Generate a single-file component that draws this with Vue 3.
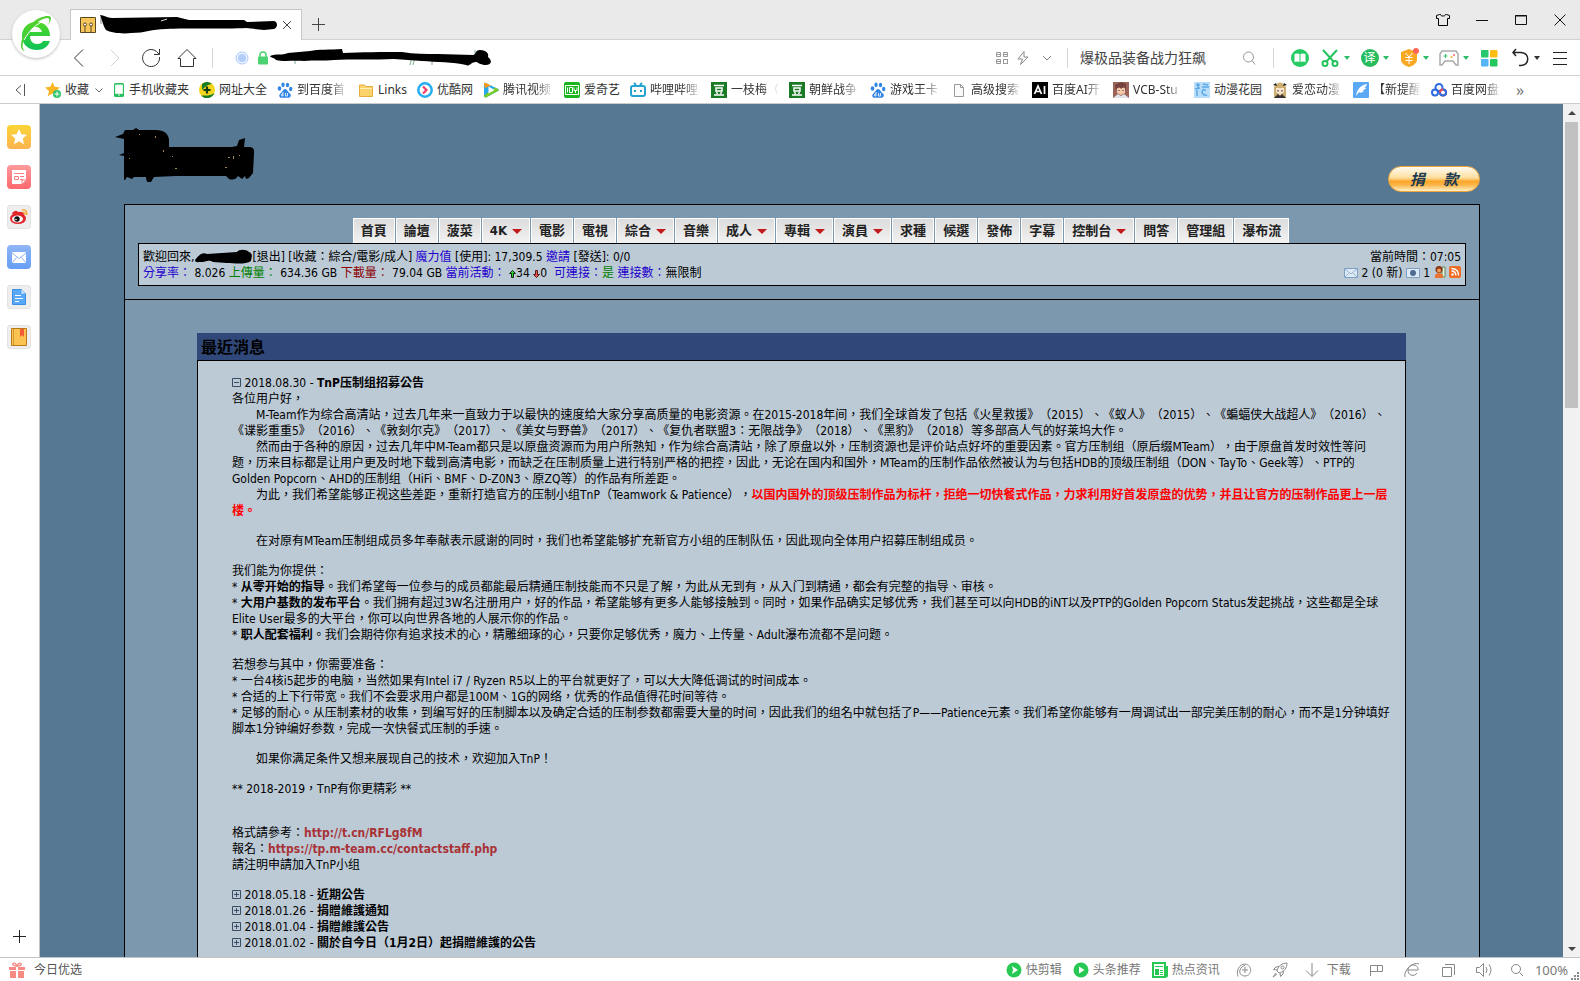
<script setup>
import { ref } from 'vue'

const search = ref('爆极品装备战力狂飙')
const address = ref('')

const bookmarks = [
  { icon: 'star', text: '收藏', more: true },
  { icon: 'phone', text: '手机收藏夹' },
  { icon: 'plus', text: '网址大全' },
  { icon: 'paw', text: '到百度首', clip: true },
  { icon: 'folder', text: 'Links' },
  { icon: 'youku', text: '优酷网' },
  { icon: 'tencent', text: '腾讯视频', clip: true },
  { icon: 'iqiyi', text: '爱奇艺' },
  { icon: 'bili', text: '哔哩哔哩', clip: true },
  { icon: 'dou', text: '一枝梅（', fade: true },
  { icon: 'dou', text: '朝鲜战争', clip: true },
  { icon: 'paw', text: '游戏王卡', clip: true },
  { icon: 'page', text: '高级搜索', clip: true },
  { icon: 'ai', text: '百度AI开', clip: true },
  { icon: 'girl', text: 'VCB-Stu', clip: true },
  { icon: 'garden', text: '动漫花园' },
  { icon: 'blonde', text: '爱恋动漫', clip: true },
  { icon: 'feather', text: '【新提醒', fade: true },
  { icon: 'cloud', text: '百度网盘', clip: true }
]

const menu = [
  { text: '首頁' }, { text: '論壇' }, { text: '菠菜' }, { text: '4K', sub: true },
  { text: '電影' }, { text: '電視' }, { text: '綜合', sub: true }, { text: '音樂' },
  { text: '成人', sub: true }, { text: '專輯', sub: true }, { text: '演員', sub: true },
  { text: '求種' }, { text: '候選' }, { text: '發佈' }, { text: '字幕' },
  { text: '控制台', sub: true }, { text: '問答' }, { text: '管理組' }, { text: '瀑布流' }
]

const older = [
  { date: '2018.05.18', title: '近期公告' },
  { date: '2018.01.26', title: '捐贈維護通知' },
  { date: '2018.01.04', title: '捐贈維護公告' },
  { date: '2018.01.02', title: '關於自今日（1月2日）起捐贈維護的公告' }
]

const sideItems = ['fav', 'headlines', 'weibo', 'mail', 'doc', 'book']
</script>

<template>
  <div class="browser" lang="zh-CN">
    <div class="brand">
      <svg width="34" height="40" viewBox="0 0 34 40" aria-label="浏览器">
        <defs>
          <linearGradient id="eg" x1="0" y1="0" x2="0" y2="1">
            <stop offset="0" stop-color="#52d926" /><stop offset="1" stop-color="#0cc257" />
          </linearGradient>
        </defs>
        <path d="M31 22H11c0 5 3 8 7 8 3 0 5-1 6-3h7c-2 6-7 9-13 9C9 36 3 30 3 22 3 14 9 8 17 8c9 0 14 6 14 14zM11 18h12c-1-3-3-5-6-5s-5 2-6 5z" fill="url(#eg)" />
        <path d="M5 25C11 13 20 5 28 4c3 0 3 3 1 7 4-6 4-9 0-9C19 2 6 12 3 25c-2 7-1 12 3 12-3-2-3-6-1-12z" fill="#52cf32" />
        <path d="M5 26C10 17 17 10 25 7" fill="none" stroke="#fff" stroke-width="1" />
      </svg>
    </div>

    <header class="titlebar">
      <div class="tab">
        <svg class="favicon" width="16" height="16" viewBox="0 0 16 16"><path d="M.5.5h15v15H.5z" fill="#f6c65b" stroke="#5c4a22" /><g fill="#fff" stroke="#5c4a22"><circle cx="5" cy="7.500" r="1.500" /><circle cx="11" cy="7.500" r="1.500" /><path d="M5 9v6M11 9v6" /></g></svg>
        <svg class="tab-mask" width="180" height="20" viewBox="0 0 180 20"><path d="M1 2v7" stroke="#888" /><path d="M0 0c4 0 7 3 12 3l65-1 12 3h55l3 2 27-1c4 1 4 6 0 8l-10 1-18-2c-20 1-60 0-80 1-15 0-20 4-35 4-8 1-20 0-25-3C3 11 2 4 0 0z" fill="#000" /><path d="M61 6l6-2" stroke="#ddd" /></svg>
        <button class="tab-close" aria-label="关闭标签"><svg width="10" height="10" viewBox="0 0 10 10"><path d="M1 1l8 8M9 1L1 9" /></svg></button>
      </div>
      <button class="newtab" aria-label="新建标签"><svg width="13" height="13" viewBox="0 0 13 13"><path d="M6.500 0v13M0 6.500h13" /></svg></button>
      <div class="window-buttons">
        <button aria-label="皮肤"><svg width="14" height="14" viewBox="0 0 14 14"><path d="M4.500 1.500c0 2 5 2 5 0h1l3 1v3h-2v7h-9v-7h-2v-3l3-1z" stroke="#000" /></svg></button>
        <button aria-label="最小化"><svg width="14" height="14" viewBox="0 0 14 14"><path d="M1 7.500h12" stroke="#111" /></svg></button>
        <button aria-label="最大化"><svg width="14" height="14" viewBox="0 0 14 14"><path d="M1.500 2.500h11v9h-11zM1 3h12" stroke="#111" /></svg></button>
        <button aria-label="关闭"><svg width="14" height="14" viewBox="0 0 14 14"><path d="M1.500 1.500l11 11m0-11l-11 11" stroke="#111" /></svg></button>
      </div>
    </header>

    <nav class="toolbar" aria-label="导航栏">
      <button class="nav" aria-label="后退"><svg width="20" height="20" viewBox="0 0 20 20"><path d="M14 1.500L5.500 10l8.500 8.500" /></svg></button>
      <button class="nav off" aria-label="前进"><svg width="20" height="20" viewBox="0 0 20 20"><path d="M6 2l8 8-8 8" /></svg></button>
      <button class="nav" aria-label="刷新"><svg width="20" height="20" viewBox="0 0 20 20"><path d="M18.500 9A8.500 8.500 0 1 1 15.500 3.500L18 6M18.500 1v5.500H13" /></svg></button>
      <button class="nav" aria-label="主页"><svg width="20" height="20" viewBox="0 0 20 20"><path d="M1 10.500L10 1.500l9 9h-2.500v8h-13v-8z" /></svg></button>
      <i class="divider"></i>
      <div class="address">
        <svg width="14" height="14" viewBox="0 0 14 14"><circle cx="7" cy="7" r="6" fill="#eef4ff" stroke="#a9c8fb" /><circle cx="7" cy="7" r="4" fill="#b3ccfa" /></svg>
        <svg width="12" height="14" viewBox="0 0 12 14"><path d="M3 6V4a3 3 0 0 1 6 0v2" fill="none" stroke="#4bd373" stroke-width="1.500" /><rect x="1" y="5.500" width="10" height="8" rx="1" fill="#4bd373" /></svg>
        <svg class="url-mask" width="224" height="20" viewBox="0 0 224 20"><path d="M25 12v4M142 9l-2 8m5-8l-2 8m19-8v8m43-15v5" stroke="#7fae90" /><path d="M0 8c6-3 12 0 18-3l22-2c8-2 20-1 32-2l1 4c18-1 40-1 59-1 12 2 24 2 36 2l35 1c3 0 2-5 7-5 7 0 9 4 8 7 5 4 3 8-2 8-4 0-8-2-9-3-5-1-8 5-11 3-12-3-30-3-44-4l-28-2c-20 1-45 0-60 1-10 1-20 0-30 1-10-1-20 1-28-1-2-3-6-2-6-4z" fill="#000" /></svg>
        <input v-model="address" aria-label="地址">
        <svg width="12" height="12" viewBox="0 0 12 12" fill="none" stroke="#999"><path d="M.5.500h4v4h-4zM7.500.500h4v4h-4zM.5 7.500h4v4h-4zM7 7.500h5M7 11.500h5M7.500 7v5M11.500 7v5M1 2.500h3M8 2.500h3M1 9.500h3" /></svg>
        <svg width="14" height="14" viewBox="0 0 14 14" fill="none" stroke="#888"><path d="M8 .5L2 8h4.500l-2 5.500L12 6H8z" /></svg>
        <svg width="10" height="10" viewBox="0 0 10 10" fill="none" stroke="#888"><path d="M1 3l4 4 4-4" /></svg>
      </div>
      <i class="divider"></i>
      <div class="search">
        <input v-model="search" aria-label="搜索">
        <button aria-label="搜索"><svg width="14" height="14" viewBox="0 0 14 14" fill="none" stroke="#999"><circle cx="6.500" cy="6" r="5" /><path d="M10 9.500l3 4" /></svg></button>
      </div>
      <i class="divider"></i>
      <div class="tools">
        <button aria-label="阅读"><svg width="20" height="20" viewBox="0 0 20 20"><circle cx="10" cy="10" r="9" fill="#27cb65" /><path d="M4.500 6q3-1 5 0v8q-2-1-5 0zM15.500 6q-3-1-5 0v8q2-1 5 0z" fill="#fff" /></svg></button>
        <button aria-label="截图"><svg width="20" height="20" viewBox="0 0 20 20" fill="none" stroke="#25c35d" stroke-width="2"><path d="M3 2l11 12M17 2L6 14" /><circle cx="5" cy="15.500" r="2.500" /><circle cx="15" cy="15.500" r="2.500" /></svg><b class="caret green"></b></button>
        <button aria-label="翻译"><span class="translate">译</span><b class="caret green"></b></button>
        <button aria-label="购物"><svg width="20" height="20" viewBox="0 0 20 20"><path d="M10 1l8 3v8c0 3-4 6-8 7-4-1-8-4-8-7V4z" fill="#faa924" /><path d="M6.500 5L10 9l3.500-4M10 9v7M6.500 9.500h7M6.500 12.500h7" fill="none" stroke="#fff" /><circle cx="17" cy="3" r="3" fill="#ff6557" /></svg><b class="caret green"></b></button>
        <button aria-label="游戏"><svg width="20" height="20" viewBox="0 0 20 20"><path d="M3 3h14l2 3v11h-2l-3-4H6l-3 4H1V6z" fill="#fff" stroke="#aaa" stroke-width="1.500" /><path d="M4.500 8h4M6.500 6v4" stroke="#30c665" /><circle cx="12.500" cy="9" r="1" fill="#fbb020" /><circle cx="15" cy="7" r="1" fill="#f66" /></svg><b class="caret green"></b></button>
        <button aria-label="应用"><svg width="20" height="20" viewBox="0 0 20 20"><rect x="2" y="2" width="7.500" height="7.500" rx="1" fill="#27c76b" /><rect x="11" y="2" width="7.500" height="7.500" rx="1" fill="#ffbc13" /><rect x="2" y="11" width="7.500" height="7.500" rx="1" fill="#55b5f6" /><rect x="11" y="11" width="7.500" height="7.500" rx="1" fill="#24c65d" /></svg></button>
        <button aria-label="撤销"><svg width="20" height="20" viewBox="0 0 20 20" fill="none" stroke="#222" stroke-width="1.500"><path d="M6 1L3 4.500 6 8M3 4.500h8c9 0 9 13 0 13H9" /></svg><b class="caret"></b></button>
        <button aria-label="菜单"><svg width="20" height="20" viewBox="0 0 20 20" stroke="#222"><path d="M3 4.500h14M3 10.500h14M3 16.500h14" /></svg></button>
      </div>
    </nav>

    <nav class="bookmarks" aria-label="收藏栏">
      <button class="fold" aria-label="收起"><svg width="12" height="14" viewBox="0 0 12 14" fill="none" stroke="#555"><path d="M7 2.500L2 7l5 4.500M10.500 1v12" /></svg></button>
      <a v-for="(b, i) in bookmarks" :key="i" href="#" class="mark">
        <svg :width="b.icon === 'phone' ? 12 : 16" height="16" :viewBox="b.icon === 'phone' ? '2 0 12 16' : '0 0 16 16'">
          <g v-if="b.icon === 'star'"><path d="M7.500 0l2.200 4.800 5.300.6-4 3.500 1.200 5.300-4.700-2.700-4.700 2.700L4 8.900 0 5.400l5.300-.6z" fill="#f9b522" /><circle cx="12" cy="12" r="4" fill="#2fc66b" /><path d="M12 9.500v5M9.500 12h5" stroke="#fff" /></g>
          <g v-else-if="b.icon === 'phone'"><rect x="3" y="1" width="10" height="14" rx="1.500" fill="#27c05c" /><path d="M4.500 3h7v8.500h-7zM7 13h2" fill="#fff" stroke="#dff7e7" /></g>
          <g v-else-if="b.icon === 'plus'"><circle cx="8" cy="8" r="8" fill="#f6d51d" /><path d="M3 2a8 8 0 0 1 10 0Q8 2 3 8zM2 13.500A8 8 0 0 0 15.500 11Q12 14 2 13.500z" fill="#157c27" /><path d="M8 4.500v7M4.500 8h7" stroke="#123c12" stroke-width="2.200" /></g>
          <g v-else-if="b.icon === 'paw'" fill="#3385e6"><ellipse cx="2.500" cy="6.500" rx="1.800" ry="2.200" /><ellipse cx="6" cy="2.800" rx="1.700" ry="2.400" /><ellipse cx="10.500" cy="3" rx="1.700" ry="2.300" /><ellipse cx="13.700" cy="7" rx="1.700" ry="2.200" /><path d="M8 7c2 0 3 3 5 4.500 2 2 0 4.500-2 4.300H5C2.500 16 1.500 13.500 3 12c2-1.500 3-5 5-5z" /><path d="M6 10v4H5q-1.500-1 0-2h1M8.500 11v3h2v-3" fill="none" stroke="#fff" stroke-width=".8" /></g>
          <g v-else-if="b.icon === 'folder'"><path d="M1.500 3h5l1 1.500h7v10h-13z" fill="#fcd36b" stroke="#e5ad3c" /><path d="M2 6.500h12" stroke="#fff0b8" /></g>
          <g v-else-if="b.icon === 'youku'"><circle cx="8" cy="8" r="6.700" fill="#fff" stroke="#25aef2" stroke-width="2.500" /><path d="M6 4.500L9.500 8 6 11.500" fill="none" stroke="#ef3c6d" stroke-width="2.200" /></g>
          <g v-else-if="b.icon === 'tencent'"><path d="M1 2q0-2 2-1l12 6q1.500 1 0 2L3 15.500q-2 .5-2-2z" fill="#26a9ea" /><path d="M3 15.500L15 9q1.500-1 0-2l-3-1.500L1 13.500q0 2.500 2 2z" fill="#77cc2c" /><path d="M1 2q0-2 2-1l5 2.500L2 6z" fill="#ff9b17" /><path d="M5.500 4.500l6 3.500-6 3.500z" fill="#fff" /></g>
          <g v-else-if="b.icon === 'iqiyi'"><rect width="16" height="16" rx="2" fill="#18b51b" /><path d="M1.500 3.500h13v9h-13zM3.500 5.500v5M5.500 5.500h3v5h-3zM10 5.500v3h3v-3M11.500 8v3" fill="none" stroke="#fff" /></g>
          <g v-else-if="b.icon === 'bili'" fill="none" stroke="#25a3d0" stroke-width="2"><rect x="1" y="4" width="14" height="10" rx="2" /><path d="M4 1l2 2M12 1l-2 2M5 8v2M11 8v2" /></g>
          <g v-else-if="b.icon === 'dou'"><rect width="16" height="16" fill="#1a7a25" /><path d="M3 3.500h10M5 6h6v3H5zM5.500 10l1 2M10.500 10l-1 2M3 13h10" fill="none" stroke="#fff" stroke-width="1.500" /></g>
          <path v-else-if="b.icon === 'page'" d="M3.500 2.500h6l3 3v9h-9zM9.500 2.500v3h3" fill="#fafafa" stroke="#999" />
          <g v-else-if="b.icon === 'ai'"><rect width="16" height="16" /><path d="M2.500 12L6 4l3.500 8M4 9.500h4M12.500 4v8" fill="none" stroke="#fff" stroke-width="1.700" /></g>
          <g v-else-if="b.icon === 'girl'"><rect width="16" height="16" fill="#9b635a" /><path d="M4 6h8v5l-4 2-4-2z" fill="#f3c8ac" /><path d="M0 16l5-4 3 2 3-2 5 4z" fill="#dfe3ec" /><path d="M3 8l3-4 2 3 3-3 2 5V2L8 0 2 3z" fill="#74413c" /><path d="M6 8v1M10 8v1" stroke="#533" /></g>
          <g v-else-if="b.icon === 'garden'"><rect width="16" height="16" fill="#b7ddfa" /><path d="M2 3h4M4 1v6M1 7l5-1M3 8v6M9 2l5 1M8 5h7M10 7c-4 3-1 7 3 6M12 8h-3" fill="none" stroke="#5ca9e6" stroke-width="1.500" /></g>
          <g v-else-if="b.icon === 'blonde'"><path d="M2 16V5q6-9 12 0v11z" fill="#cfae73" /><path d="M4 6h8v4l-4 3-4-3z" fill="#fae3cd" /><path d="M1 3l3-2 1 3zM15 3l-3-2-1 3z" fill="#222" /><path d="M2 16l4-4 2 2 2-2 4 4z" fill="#333" /><path d="M6 8v1.500M10 8v1.500" stroke="#222" /></g>
          <g v-else-if="b.icon === 'feather'"><rect width="16" height="16" rx="1" fill="#5ba8f5" /><path d="M3 14C4 7 8 3 14 2c-1 3-2 3-3 3l2 1c-1 2-3 2-4 2l2 1c-2 2-4 2-5 1z" fill="#fff" /></g>
          <g v-else fill="none" stroke="#2c6be0" stroke-width="2"><circle cx="8" cy="5.500" r="3.500" /><circle cx="4" cy="10.500" r="3" /><circle cx="12" cy="10.500" r="3" stroke="#e8475c" /><path d="M12 7.500a3 3 0 1 1-3 3" /></g>
        </svg>
        <span :class="{ clip: b.clip, fade: b.clip || b.fade }">{{ b.text }}</span>
        <svg v-if="b.more" class="more" width="8" height="8" viewBox="0 0 8 8" fill="none" stroke="#666"><path d="M.5 2.500L4 6l3.500-3.500" /></svg>
      </a>
      <button class="overflow" aria-label="更多收藏">»</button>
    </nav>

    <div class="middle">
      <aside class="sidebar">
        <button v-for="s in sideItems" :key="s" :class="['side', s]" :aria-label="s">
          <svg width="24" height="24" viewBox="0 0 24 24">
            <path v-if="s === 'fav'" d="M12 4l2.400 5.200 5.600.6-4.200 3.800 1.200 5.600-5-2.900-5 2.900 1.200-5.600L4 9.800l5.600-.6z" fill="#fff" />
            <g v-else-if="s === 'headlines'"><path d="M5 5h14v10l-4 4H5z" fill="#fff" /><path d="M7 8.500h10M13 11.500h4M13 14.500h3M15 19v-4h4" stroke="#ff7c80" fill="none" /><path d="M7.500 11.500h4v3h-4z" fill="none" stroke="#ff7c80" /></g>
            <g v-else-if="s === 'weibo'"><ellipse cx="11" cy="13.500" rx="8" ry="5.500" fill="#e1262d" /><path d="M5 8q4-4 6-1 5-1 6 2l-2 4-8-1z" fill="#e1262d" /><ellipse cx="10.500" cy="14" rx="5.500" ry="3.500" fill="#fff" /><circle cx="10" cy="14" r="2.700" fill="#111" /><circle cx="9" cy="14.500" r=".8" fill="#fff" /><path d="M15 5q5-1 5 5M15.500 7.500q3-.5 2.500 2.500" fill="none" stroke="#f7a029" stroke-width="1.300" /></g>
            <g v-else-if="s === 'mail'"><rect x="5" y="7" width="14" height="11" rx="1" fill="#fff" /><path d="M5 8l7 5.500L19 8M5.500 17.500l4-5M18.500 17.500l-4-5" fill="none" stroke="#91b4f2" /></g>
            <g v-else-if="s === 'doc'"><path d="M5.500 4.500h9l4 4v11h-13z" fill="#5aa9f9" stroke="#3c8ee2" /><path d="M14.500 4.500v4h4z" fill="#d5eaff" /><path d="M8 10.500h6M8 13.500h8M8 16.500h4" stroke="#fff" /></g>
            <g v-else><path d="M4.500 3.500h15v17h-15z" fill="#fbc34f" stroke="#b87918" /><path d="M6.500 4v16" stroke="#d59a2d" /><path d="M13 4h4v8l-2-2-2 2z" fill="#f35b35" /></g>
          </svg>
        </button>
        <button class="add" aria-label="添加"><svg width="13" height="13" viewBox="0 0 13 13"><path d="M6.500 0v13M0 6.500h13" stroke="#222" /></svg></button>
      </aside>

      <main class="page">
        <header class="masthead">
          <svg class="logo-mask" width="142" height="54" viewBox="0 0 142 54"><path d="M0 9l8-3 2-4h8l3-2 3 2h17q12 0 13 10v7h63l5-1 2-6 6-2-1 9h5q6 0 5 6l-1 20-4 5-3 1-1-3-3 3-4-3q-3 5-9 3l-3-3H61l-22 1-3 5q-5 2-5-5H19l-2 2-5-2-2 3H9V28l-5-1 5-2V11z" fill="#000" /><g fill="#a58a4d"><path d="M24 6h1v1h-1zM40 8h1v2h-1zM48 22h1v2h-1zM14 30h1v1h-1zM57 28h1v1h-1zM60 40h2v1h-2zM113 29h2v1h-2zM118 28h1v3h-1zM110 39h2v1h-2zM124 27h1v1h-1z" /></g></svg>
          <a class="donate" href="#">捐　 款</a>
        </header>

        <div class="frame" lang="zh-TW">
          <div class="top">
            <ul class="menu">
              <li v-for="m in menu" :key="m.text"><a href="#">{{ m.text }}<b v-if="m.sub" class="down"></b></a></li>
            </ul>
            <div class="info">
              <div>
                歡迎回來,<svg class="name-mask" width="58" height="16" viewBox="0 0 58 16"><path d="M1 11C5 6 8 3 13 5l15-1 15-1c2-3 9-3 12 0 5 2 2 6 2 9-6 4-17 2-24 2l-14-1c-4-3-8 0-12 0-3 0-6 1-6-2z" /></svg>[<a href="#">退出</a>] [<a href="#">收藏</a>：<a href="#">綜合</a>/<a href="#">電影</a>/<a href="#">成人</a>] <span class="blue">魔力值</span> [<a href="#">使用</a>]: 17,309.5 <span class="blue">邀請</span> [<a href="#">發送</a>]: 0/0<br>
                <span class="blue">分享率：</span> 8.026 <span class="green">上傳量：</span> 634.36 GB <span class="maroon">下載量：</span> 79.04 GB <span class="blue">當前活動：</span> <svg width="7" height="8" viewBox="0 0 7 8"><path d="M3.500.5l3 3h-2v4h-2v-4h-2z" fill="#29d32d" stroke="#000" stroke-width=".8" /></svg>34 <svg width="7" height="8" viewBox="0 0 7 8"><path d="M3.500 7.500l3-3h-2v-4h-2v4h-2z" fill="#f3524a" stroke="#300" stroke-width=".8" /></svg>0 &nbsp;<span class="blue">可連接：</span><span class="green">是</span> <span class="blue">連接數：</span>無限制
              </div>
              <div class="right">
                當前時間：07:05<br>
                <svg width="14" height="10" viewBox="0 0 14 10"><path d="M.5.500h13v9H.5z" fill="#dce9f6" stroke="#7f9fc2" /><path d="M1 1l6 5 6-5M1 9l4-4M13 9L9 5" fill="none" stroke="#9ab4cf" /></svg> 2 (0 新) <svg width="14" height="10" viewBox="0 0 14 10"><path d="M.5.500h13v9H.5z" fill="#dce9f6" stroke="#7f9fc2" /><circle cx="7" cy="5" r="3" fill="#4f6c90" /></svg> 1 <svg width="12" height="12" viewBox="0 0 12 12"><path d="M8 1h3v10H8z" fill="#e8f4df" stroke="#5d8650" /><circle cx="5" cy="3.500" r="3.500" fill="#8a3513" /><circle cx="5" cy="4.500" r="2" fill="#f0a060" /><path d="M1 12V9q4-4 8 0v3z" fill="#e9742f" /></svg> <svg width="12" height="12" viewBox="0 0 12 12"><rect width="12" height="12" rx="2" fill="#ef6d24" /><circle cx="3.500" cy="8.500" r="1.200" fill="#fff" /><path d="M2.500 5q4 0 4.500 4.500M2.500 2.500q7 0 7 7" fill="none" stroke="#fff" stroke-width="1.300" /></svg>
              </div>
            </div>
          </div>

          <section class="news">
            <h2>最近消息</h2>
            <div class="body">
              <p>
                <button class="toggle" aria-label="折叠"><svg width="9" height="9" viewBox="0 0 9 9"><path d="M.5.500h8v8h-8zM2 4.500h5" /></svg></button> 2018.08.30 - <b>TnP压制组招募公告</b><br>
                各位用户好，<br>
                　　M-Team作为综合高清站，过去几年来一直致力于以最快的速度给大家分享高质量的电影资源。在2015-2018年间，我们全球首发了包括《火星救援》（2015）、《蚁人》（2015）、《蝙蝠侠大战超人》（2016）、<br>
                《谍影重重5》（2016）、《敦刻尔克》（2017）、《美女与野兽》（2017）、《复仇者联盟3：无限战争》（2018）、《黑豹》（2018）等多部高人气的好莱坞大作。<br>
                　　然而由于各种的原因，过去几年中M-Team都只是以原盘资源而为用户所熟知，作为综合高清站，除了原盘以外，压制资源也是评价站点好坏的重要因素。官方压制组（原后缀MTeam），由于原盘首发时效性等问<br>
                题，历来目标都是让用户更及时地下载到高清电影，而缺乏在压制质量上进行特别严格的把控，因此，无论在国内和国外，MTeam的压制作品依然被认为与包括HDB的顶级压制组（DON、TayTo、Geek等）、PTP的<br>
                Golden Popcorn、AHD的压制组（HiFi、BMF、D-Z0N3、原ZQ等）的作品有所差距。<br>
                　　为此，我们希望能够正视这些差距，重新打造官方的压制小组TnP（Teamwork &amp; Patience），<b class="red">以国内国外的顶级压制作品为标杆，拒绝一切快餐式作品，力求利用好首发原盘的优势，并且让官方的压制作品更上一层<br>
                楼。</b>
              </p>
              <p>　　在对原有MTeam压制组成员多年奉献表示感谢的同时，我们也希望能够扩充新官方小组的压制队伍，因此现向全体用户招募压制组成员。</p>
              <p>
                我们能为你提供：<br>
                * <b>从零开始的指导</b>。我们希望每一位参与的成员都能最后精通压制技能而不只是了解，为此从无到有，从入门到精通，都会有完整的指导、审核。<br>
                * <b>大用户基数的发布平台</b>。我们拥有超过3W名注册用户，好的作品，希望能够有更多人能够接触到。同时，如果作品确实足够优秀，我们甚至可以向HDB的iNT以及PTP的Golden Popcorn Status发起挑战，这些都是全球<br>
                Elite User最多的大平台，你可以向世界各地的人展示你的作品。<br>
                * <b>职人配套福利</b>。我们会期待你有追求技术的心，精雕细琢的心，只要你足够优秀，魔力、上传量、Adult瀑布流都不是问题。
              </p>
              <p>
                若想参与其中，你需要准备：<br>
                * 一台4核i5起步的电脑，当然如果有Intel i7 / Ryzen R5以上的平台就更好了，可以大大降低调试的时间成本。<br>
                * 合适的上下行带宽。我们不会要求用户都是100M、1G的网络，优秀的作品值得花时间等待。<br>
                * 足够的耐心。从压制素材的收集，到编写好的压制脚本以及确定合适的压制参数都需要大量的时间，因此我们的组名中就包括了P——Patience元素。我们希望你能够有一周调试出一部完美压制的耐心，而不是1分钟填好<br>
                脚本1分钟编好参数，完成一次快餐式压制的手速。
              </p>
              <p>　　如果你满足条件又想来展现自己的技术，欢迎加入TnP！</p>
              <p class="last">** 2018-2019，TnP有你更精彩 **</p>
              <p>
                格式請參考：<a class="link" href="#">http://t.cn/RFLg8fM</a><br>
                報名：<a class="link" href="#">https://tp.m-team.cc/contactstaff.php</a><br>
                請注明申請加入TnP小组
              </p>
              <ul class="older">
                <li v-for="o in older" :key="o.date">
                  <button class="toggle" aria-label="展開"><svg width="9" height="9" viewBox="0 0 9 9"><path d="M.5.500h8v8h-8zM2 4.500h5M4.500 2v5" /></svg></button> {{ o.date }} - <b>{{ o.title }}</b>
                </li>
              </ul>
            </div>
          </section>
        </div>
      </main>

      <div class="scrollbar" aria-hidden="true">
        <b class="arrow up"></b>
        <i class="thumb"></i>
        <b class="arrow"></b>
      </div>
    </div>

    <footer class="statusbar">
      <a href="#" class="pick"><svg width="16" height="16" viewBox="0 0 16 16"><path d="M0 5h7v3H0zM9 5h7v3H9zM1 9h6v7H1zM9 9h6v7H9z" fill="#f88a84" /><path d="M8 4Q3 4 4 1.500 6 0 8 4q2-4 4-2.500 1 2.500-4 2.500" fill="none" stroke="#f88a84" stroke-width="1.300" /></svg>今日优选</a>
      <div class="status-right">
        <a href="#"><svg width="16" height="16" viewBox="0 0 16 16"><circle cx="8" cy="8" r="7.500" fill="#27c954" /><path d="M6 4l6 4-6 4 1-4z" fill="#fff" /></svg>快剪辑</a>
        <a href="#"><svg width="16" height="16" viewBox="0 0 16 16"><circle cx="8" cy="8" r="7.500" fill="#27c954" /><path d="M6 4.500l5.500 3.500L6 11.500z" fill="#fff" /></svg>头条推荐</a>
        <a href="#" class="feed"><svg width="16" height="16" viewBox="0 0 16 16"><path d="M1 1h12v14H1z" fill="#fff" stroke="#27c954" stroke-width="2" /><path d="M14 5h1v9l-2 1" fill="none" stroke="#27c954" stroke-width="2" /><path d="M3 4.500h8M8 8.500h3M8 10.500h3M8 12.500h3" stroke="#27c954" /><path d="M3 7h4v6H3z" fill="#27c954" /></svg>热点资讯</a>
        <button class="slot" aria-label="加速"><svg width="16" height="16" viewBox="0 0 16 16"><path d="M2 14.500C0 9 3 2 9 2c8 1 7 12 0 12-4 0-6-3-5-6 1-3 3-4 5-4.500M9 5v6M6 8h6" /></svg></button>
        <button class="slot" aria-label="火箭"><svg width="16" height="16" viewBox="0 0 16 16"><path d="M5 9c1-5 5-8 10-8 0 5-3 9-8 10zM5 8L1.500 7.500 4 5l3-.5M8 11l.5 3.500L11 12l.5-3M4 11l-3 4 4-3" /><circle cx="10.500" cy="5.500" r="1.500" /></svg></button>
        <a href="#" class="download"><svg width="16" height="16" viewBox="0 0 16 16"><path d="M8 1v13M2 8.500L8 14.500l6-6" /></svg>下载</a>
        <button class="slot" aria-label="标记"><svg width="16" height="16" viewBox="0 0 16 16"><path d="M2.500 14V3.500h12v6h-5v-6M2.500 9.500h7" /></svg></button>
        <button class="slot" aria-label="内核"><svg width="16" height="16" viewBox="0 0 16 16"><path d="M4 8h10c1-6-9-7-10-1-1 7 7 8 9 4M1 15C-1 9 9-1 15 2" /></svg></button>
        <button class="slot" aria-label="窗口"><svg width="16" height="16" viewBox="0 0 16 16"><path d="M2.500 5.500h9v9h-9zM5 2.500h9.500V13" /></svg></button>
        <button class="slot" aria-label="声音"><svg width="18" height="16" viewBox="0 0 18 16"><path d="M1.500 5.500h3l4-4v13l-4-4h-3zM11 5q2 3 0 6M14 2.500q4 5.500 0 11" /></svg></button>
        <button class="zoom"><svg width="14" height="14" viewBox="0 0 14 14"><circle cx="6" cy="6" r="4.500" /><path d="M9.500 9.500L13 13" /></svg>100%</button>
        <svg class="grip" width="9" height="9" viewBox="0 0 9 9"><path d="M6 0h2v2H6zM3 3h2v2H3zM6 3h2v2H6zM0 6h2v2H0zM3 6h2v2H3zM6 6h2v2H6z" /></svg>
      </div>
    </footer>
  </div>
</template>

<style>
body { margin: 0; overflow: hidden; }
</style>

<style scoped>
.browser {
  position: relative;
  display: flex;
  flex-direction: column;
  height: 100vh;
  background: #fff;
  color: #333;
  font: 12px/16px "Noto Sans", "Noto Sans CJK SC", sans-serif;
  text-spacing-trim: space-all;
}
button { border: 0; padding: 0; background: none; color: inherit; font: inherit; display: inline-flex; align-items: center; justify-content: center; }
input { border: 0; outline: 0; padding: 0; background: none; font: inherit; color: inherit; min-width: 0; }
a { color: inherit; text-decoration: none; }
svg { flex: none; }
ul { margin: 0; padding: 0; list-style: none; }

.brand { position: absolute; left: 12px; top: 10px; width: 48px; height: 48px; border-radius: 50%; background: #fff; box-shadow: 0 1px 3px #bbb; display: flex; align-items: center; justify-content: center; z-index: 2; }

.titlebar { flex: none; display: flex; align-items: flex-end; height: 40px; box-sizing: border-box; background: #eaeaea; border-bottom: 1px solid #d2d2d2; padding-left: 70px; }
.tab { display: flex; align-items: center; width: 232px; height: 31px; margin-bottom: -1px; box-sizing: border-box; border: 1px solid #c6c6c6; border-bottom: 0; background: #fff; padding: 0 9px; }
.tab-mask { margin-left: 4px; }
.tab-close { margin-left: auto; }
.tab-close svg, .newtab svg { fill: none; stroke: #444; }
.newtab { width: 32px; height: 30px; }
.window-buttons { display: flex; margin-left: auto; height: 39px; padding-right: 1px; }
.window-buttons button { width: 39px; }
.window-buttons svg { fill: none; }

.toolbar { flex: none; display: flex; align-items: center; height: 36px; box-sizing: border-box; border-bottom: 1px solid #d2d2d2; padding-left: 61px; padding-right: 10px; }
.nav { width: 36px; height: 30px; }
.nav svg { fill: none; stroke: #333; }
.nav.off svg { stroke: #d5d5d5; }
.divider { width: 1px; height: 20px; background: #d6d6d6; margin: 0 7px; }
.address { flex: 1; display: flex; align-items: center; gap: 8px; padding: 0 8px 0 15px; }
.address input { flex: 1; }
.url-mask { margin-left: -7px; }
.address svg:last-child { margin-left: 4px; }
.search { display: flex; align-items: center; width: 191px; padding-left: 5px; box-sizing: border-box; }
.search input { flex: 1; font-size: 14px; color: #444; }
.search button { margin-right: 10px; }
.tools { display: flex; align-items: center; justify-content: space-between; width: 280px; padding-left: 9px; }
.tools button { gap: 4px; }
.translate { width: 18px; height: 18px; border-radius: 50%; background: #27bd5e; color: #fff; line-height: 18px; }
.caret { border: 3px solid transparent; border-top: 4px solid #333; border-bottom: 0; }
.caret.green { border-top-color: #2ebc66; }

.bookmarks { flex: none; display: flex; align-items: center; height: 28px; box-sizing: border-box; border-bottom: 1px solid #ccc; gap: 10px; padding-left: 14px; color: #333; }
.fold { margin-right: 9px; }
.mark { display: flex; align-items: center; gap: 4px; white-space: nowrap; flex: none; }
.more { margin-left: 2px; }
.clip { width: 51px; }
.fade { mask-image: linear-gradient(90deg, #000 65%, transparent); }
.overflow { margin-left: 4px; font-size: 16px; color: #777; }

.middle { flex: 1; min-height: 0; display: flex; }
.sidebar { flex: none; width: 40px; box-sizing: border-box; border-right: 1px solid #c4c4c4; display: flex; flex-direction: column; align-items: center; gap: 16px; padding: 21px 1px 14px 0; }
.side { width: 24px; height: 24px; border-radius: 4px; background: #eee; box-shadow: 0 0 0 1px #e3e3e3 inset; }
.side.fav { background: linear-gradient(#fbd535, #fcb34f); box-shadow: none; }
.side.headlines { background: linear-gradient(#ff9a9c, #fb686c); box-shadow: none; }
.side.mail { background: linear-gradient(#90b6f6, #659ef5); box-shadow: none; }
.add { margin-top: auto; }

.page { flex: 1; min-width: 0; overflow: hidden; background: #577893; padding: 0 83px 0 84px; color: #000; font-family: "DejaVu Sans Condensed", "Noto Sans CJK TC", sans-serif; }
.masthead { display: flex; justify-content: space-between; align-items: flex-end; height: 100px; }
.logo-mask { margin: 0 0 22px -9px; }
.donate { width: 92px; height: 26px; margin-bottom: 12px; box-sizing: border-box; border: 1px solid #f0a63a; border-radius: 13px; background: linear-gradient(#fffaf0, #fddf9f 45%, #fba629 60%, #fbb649 75%, #fff1c9); color: #1c3a52; font: italic bold 15px/24px "Noto Sans CJK TC", sans-serif; text-align: center; }
.frame { border: 1px solid #000; background: #7c98af; }
.top { padding: 13px; border-bottom: 1px solid #000; }
.menu { display: flex; justify-content: center; gap: 1px; padding-left: 38px; }
.menu a { display: flex; align-items: center; height: 24px; padding: 0 7px; border: 1px solid #fff; border-bottom: 0; background: linear-gradient(#dcdcdc, #f2f2f2); color: #222; font: bold 13px/24px "DejaVu Sans Condensed", "Noto Sans CJK TC", sans-serif; }
.down { border: 5px solid transparent; border-top-color: #c11a1a; border-bottom: 0; margin-left: 5px; }
.info { display: flex; justify-content: space-between; border: 1px solid #000; background: #bccad6; padding: 5px 4px 4px; }
.info svg { vertical-align: -1px; }
.info .name-mask { vertical-align: -4px; }
.right { text-align: right; }
.blue { color: #1f00cc; }
.green { color: #008000; }
.maroon { color: #8b0000; }
.news { margin: 33px 73px 0 72px; }
.news h2 { margin: 0; background: #2f4879; padding: 0 4px; font: bold 16px/27px "Noto Sans CJK TC", sans-serif; }
.body { border: 1px solid #000; background: #bccad6; padding: 14px 0 60px 34px; }
.body p { margin: 0 0 14px; white-space: nowrap; }
.body p.last { margin-bottom: 28px; }
.red { color: #f00; }
.link { color: #a83236; font-weight: bold; }
.toggle svg { fill: none; stroke: #3c4c66; }

.scrollbar { flex: none; width: 17px; box-sizing: border-box; background: #f1f1f1; display: flex; flex-direction: column; align-items: center; padding: 7px 0 6px; }
.thumb { width: 13px; height: 286px; background: #c1c1c1; margin: 7px 0 auto; }
.arrow { border: 4px solid transparent; border-top-color: #444; border-bottom: 0; }
.arrow.up { transform: rotate(180deg); }

.statusbar { flex: none; height: 24px; box-sizing: border-box; border-top: 1px solid #c4c4c4; display: flex; align-items: center; justify-content: space-between; padding-left: 9px; color: #555; }
.pick { display: flex; align-items: center; gap: 9px; }
.status-right { display: flex; align-items: center; color: #777; align-self: stretch; }
.status-right a { display: flex; align-items: center; gap: 4px; margin-right: 11px; }
.status-right a.feed { margin-right: 6px; }
.status-right a.download { gap: 7px; margin: 0 7px 0 6px; }
.slot { width: 36px; }
.slot svg, .download svg, .zoom svg { fill: none; stroke: #888; }
.zoom { gap: 11px; margin-left: 8px; font-size: 13px; }
.grip { align-self: flex-end; fill: #888; margin-left: 3px; }
</style>
